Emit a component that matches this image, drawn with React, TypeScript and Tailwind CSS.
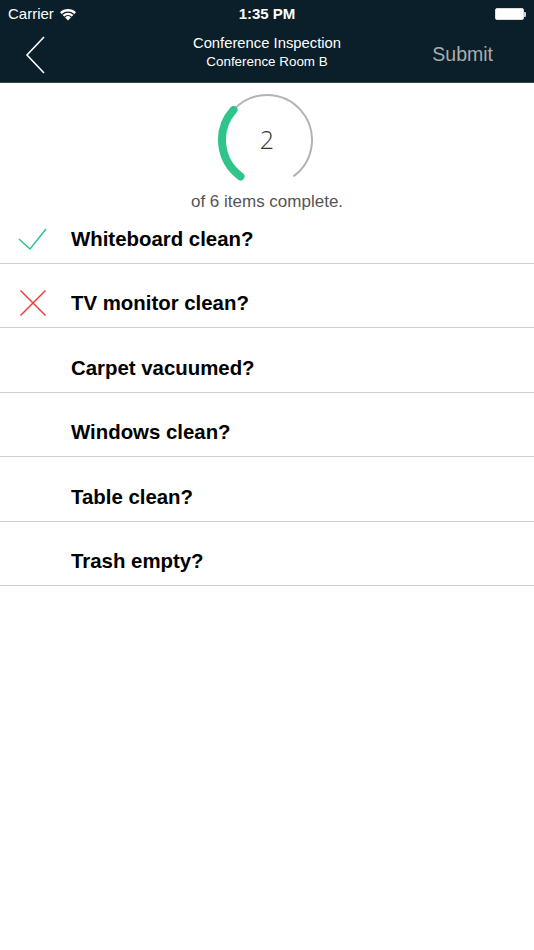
import React from 'react';

type Status = 'pass' | 'fail' | 'none';

const ITEMS: { label: string; status: Status; h: string }[] = [
  { label: 'Whiteboard clean?', status: 'pass', h: 'h-[49px]' },
  { label: 'TV monitor clean?', status: 'fail', h: 'h-[64px]' },
  { label: 'Carpet vacuumed?', status: 'none', h: 'h-[65px]' },
  { label: 'Windows clean?', status: 'none', h: 'h-[64px]' },
  { label: 'Table clean?', status: 'none', h: 'h-[65px]' },
  { label: 'Trash empty?', status: 'none', h: 'h-[64px]' },
];

const FONT = { fontFamily: '"Liberation Sans", Arial, sans-serif' };

const ProgressRing: React.FC<{ done: number; total: number }> = ({ done, total }) => {
  // gauge: 288deg sweep, 72deg gap at the bottom
  const r = 45;
  const cx = 50;
  const cy = 50;
  const start = 216;
  const sweep = 288;
  const pt = (deg: number) => {
    const a = (deg * Math.PI) / 180;
    return [cx + r * Math.sin(a), cy - r * Math.cos(a)];
  };
  const arc = (from: number, to: number) => {
    const [x1, y1] = pt(from);
    const [x2, y2] = pt(to);
    const large = to - from > 180 ? 1 : 0;
    return `M ${x1} ${y1} A ${r} ${r} 0 ${large} 1 ${x2} ${y2}`;
  };
  const greenEnd = start + (sweep * done) / total;

  return (
    <div className="relative w-[100px] h-[100px]">
      <svg width="100" height="100" viewBox="0 0 100 100" className="absolute inset-0">
        <path d={arc(start, start + sweep)} fill="none" stroke="#b3b3b3" strokeWidth="2" />
        <path d={arc(start, greenEnd)} fill="none" stroke="#2ec48a" strokeWidth="8" strokeLinecap="round" />
      </svg>
      <div className="absolute inset-0 flex items-center justify-center">
        <span className="text-[25px] text-[#333]" style={{ fontFamily: '"Open Sans", sans-serif', fontWeight: 300 }}>
          {done}
        </span>
      </div>
    </div>
  );
};

const StatusIcon: React.FC<{ status: Status }> = ({ status }) => {
  if (status === 'pass') {
    return (
      <svg width="30" height="24" viewBox="0 0 30 24">
        <path d="M1 12 L12 22 L28 2" fill="none" stroke="#2ec48a" strokeWidth="1.5" />
      </svg>
    );
  }
  if (status === 'fail') {
    return (
      <svg width="28" height="28" viewBox="0 0 28 28" className="ml-[1px]">
        <path d="M1.5 1.5 L26.5 26.5 M26.5 1.5 L1.5 26.5" fill="none" stroke="#f23b3b" strokeWidth="1.5" />
      </svg>
    );
  }
  return null;
};

export default function App() {
  const done = 2;

  return (
    <div className="w-[534px] h-[950px] bg-white overflow-hidden" style={FONT}>
      {/* Header */}
      <div className="bg-[#0a1f29] h-[83px] border-b border-[#33444c]">
        <div className="h-[28px] flex items-center justify-between px-[8px] text-white">
          <div className="flex items-center gap-[5px] w-[120px]">
            <span className="text-[15px]">Carrier</span>
            <svg width="18" height="13" viewBox="0 0 18 13">
              <path d="M9 12.5 L1 4.2 A11.5 11.5 0 0 1 17 4.2 Z" fill="white" />
              <path d="M3.2 6.4 A8.5 8.5 0 0 1 14.8 6.4" fill="none" stroke="#0a1f29" strokeWidth="1.3" />
              <path d="M5.6 8.9 A5 5 0 0 1 12.4 8.9" fill="none" stroke="#0a1f29" strokeWidth="1.3" />
            </svg>
          </div>
          <span className="text-[15px] font-bold">1:35 PM</span>
          <div className="w-[120px] flex justify-end">
            <div className="flex items-center">
              <div className="w-[29px] h-[12px] bg-white rounded-[2px] border border-[#ddd]" />
              <div className="w-[2px] h-[5px] bg-white/80 rounded-r-[1px]" />
            </div>
          </div>
        </div>
        <div className="h-[54px] flex items-center justify-between">
          <div className="w-[120px] pl-[24px]">
            <svg width="22" height="38" viewBox="0 0 22 38">
              <path d="M20 1 L3 19 L20 37" fill="none" stroke="white" strokeWidth="1.6" />
            </svg>
          </div>
          <div className="flex flex-col items-center text-white leading-tight -mt-[5px]">
            <span className="text-[14.8px]">Conference Inspection</span>
            <span className="text-[13.4px] mt-[1px]">Conference Room B</span>
          </div>
          <div className="w-[120px] flex justify-end pr-[41px]">
            <span className="text-[19.5px] text-[#a9acae]">Submit</span>
          </div>
        </div>
      </div>

      {/* Progress */}
      <div className="h-[132px] flex flex-col items-center pt-[7px]">
        <ProgressRing done={done} total={ITEMS.length} />
        <span className="text-[17px] text-[#555] -mt-[1px]">of {ITEMS.length} items complete.</span>
      </div>

      {/* Checklist */}
      <div className="flex flex-col">
        {ITEMS.map((item) => (
          <div key={item.label} className={`${item.h} flex items-end border-b border-[#cfcfcf]`}>
            <div className="h-[48px] w-full flex items-center">
              <div className="w-[71px] flex pl-[18px]">
                <StatusIcon status={item.status} />
              </div>
              <span className="text-[20.4px] font-bold text-black">{item.label}</span>
            </div>
          </div>
        ))}
      </div>
    </div>
  );
}
